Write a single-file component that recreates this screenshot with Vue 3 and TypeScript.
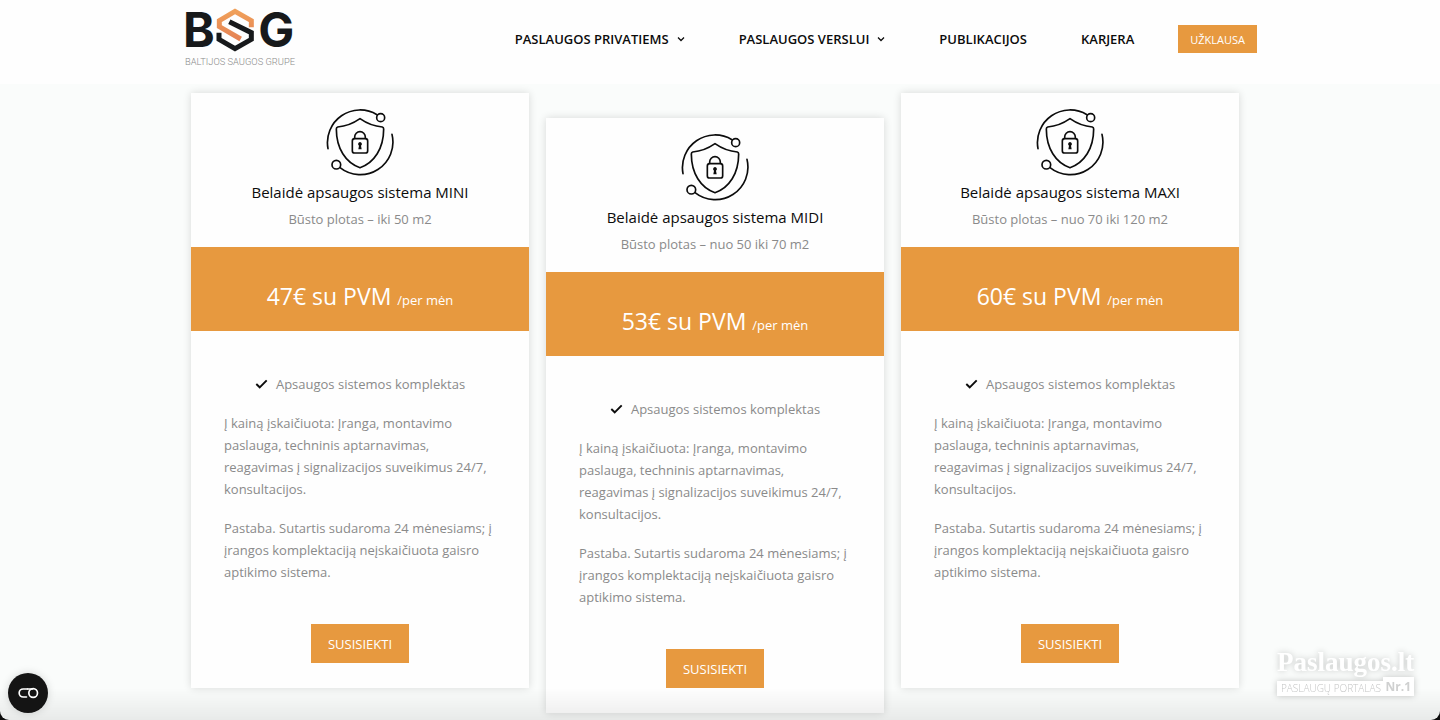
<script setup lang="ts">
interface NavItem {
  label: string
  hasMenu: boolean
}

interface Plan {
  id: string
  title: string
  area: string
  price: string
  lowered: boolean
}

const navItems: NavItem[] = [
  { label: 'PASLAUGOS PRIVATIEMS', hasMenu: true },
  { label: 'PASLAUGOS VERSLUI', hasMenu: true },
  { label: 'PUBLIKACIJOS', hasMenu: false },
  { label: 'KARJERA', hasMenu: false },
]

const plans: Plan[] = [
  { id: 'mini', title: 'Belaidė apsaugos sistema MINI', area: 'Būsto plotas – iki 50 m2', price: '47€ su PVM', lowered: false },
  { id: 'midi', title: 'Belaidė apsaugos sistema MIDI', area: 'Būsto plotas – nuo 50 iki 70 m2', price: '53€ su PVM', lowered: true },
  { id: 'maxi', title: 'Belaidė apsaugos sistema MAXI', area: 'Būsto plotas – nuo 70 iki 120 m2', price: '60€ su PVM', lowered: false },
]
</script>

<template>
  <div class="page">
    <header class="header">
      <div class="header-inner">
        <a class="logo" href="#" aria-label="Baltijos saugos grupe">
          <svg viewBox="39 0 342 201" width="114" height="67">
            <defs>
              <linearGradient id="logo-orange" x1="0" y1="0" x2="0" y2="1">
                <stop offset="0" stop-color="#f0a05a" />
                <stop offset="1" stop-color="#e58355" />
              </linearGradient>
            </defs>
            <text class="logo-letter" x="39" y="140">B</text>
            <text class="logo-letter" x="265" y="140">G</text>
            <g fill="none" stroke-width="15">
              <path stroke="url(#logo-orange)" d="M244 82V62L195 34L148 62V80L212 117" />
              <path stroke="#17191b" d="M147 98V118L195 146L244 118V98L178 65" />
            </g>
            <text class="logo-caption" x="45" y="195">BALTIJOS SAUGOS GRUPE</text>
          </svg>
        </a>
        <nav class="nav">
          <a v-for="item in navItems" :key="item.label" class="nav-link" href="#">
            {{ item.label }}
            <svg v-if="item.hasMenu" class="chevron" viewBox="0 0 8 8" width="8" height="8">
              <path d="M1 2.5L4 5.5L7 2.5" fill="none" stroke="currentColor" stroke-width="1.3" />
            </svg>
          </a>
          <button class="button button-small" type="button">UŽKLAUSA</button>
        </nav>
      </div>
    </header>

    <main class="plans">
      <article v-for="plan in plans" :key="plan.id" class="card" :class="{ lowered: plan.lowered }">
        <div class="card-head">
          <svg class="shield" viewBox="18 24 204 204" width="68" height="68" aria-hidden="true">
            <g fill="none" stroke="#0c0c0c" stroke-width="5" stroke-linecap="round" stroke-linejoin="round">
              <path d="M24 146A98 98 0 0 1 171 44" />
              <path d="M216 103A98 98 0 0 1 60 203" />
              <circle cx="182" cy="53" r="12" />
              <circle cx="49" cy="194" r="13" />
              <path d="M120 56C140 70 162 79 187 81Q191 82 191 87C191 145 163 188 120 203C77 188 49 145 49 87Q49 82 53 81C78 79 100 70 120 56Z" />
              <rect x="97" y="116" width="46" height="43" rx="7" />
              <path d="M104 115V111A16 16 0 0 1 136 111V115" />
            </g>
            <path d="M120 126a6 6 0 0 1 3 11l2 11h-10l2-11a6 6 0 0 1 3-11Z" fill="#0c0c0c" />
          </svg>
          <h2 class="title">{{ plan.title }}</h2>
          <p class="area">{{ plan.area }}</p>
        </div>
        <p class="price">{{ plan.price }} <span class="period">/per mėn</span></p>
        <div class="card-body">
          <p class="feature">
            <svg viewBox="0 0 13 10" width="13" height="10" aria-hidden="true">
              <path d="M1.3 5L4.7 8.3L11.7 1.3" fill="none" stroke="#0c0c0c" stroke-width="1.9" />
            </svg>
            Apsaugos sistemos komplektas
          </p>
          <p>Į kainą įskaičiuota: Įranga, montavimo paslauga, techninis aptarnavimas, reagavimas į signalizacijos suveikimus 24/7, konsultacijos.</p>
          <p>Pastaba. Sutartis sudaroma 24 mėnesiams; į įrangos komplektaciją neįskaičiuota gaisro aptikimo sistema.</p>
        </div>
        <button class="button button-large" type="button">SUSISIEKTI</button>
      </article>
    </main>

    <div class="bottom-shade"></div>
    <div class="corners"></div>

    <div class="watermark">
      <span class="watermark-name">Paslaugos.lt</span>
      <span class="watermark-bar">
        <span class="watermark-text">PASLAUGŲ PORTALAS</span>
        <strong class="watermark-rank">Nr.1</strong>
      </span>
    </div>

    <button class="consent" type="button" aria-label="Slapukų nustatymai">
      <svg viewBox="52 84 68 36" width="23" height="12">
        <g fill="none" stroke="#fff" stroke-width="5" stroke-linecap="round">
          <path d="M83 90H70A12 12 0 0 0 70 114H80" />
          <circle cx="100" cy="102" r="13" />
          <path d="M83 90H98" />
        </g>
      </svg>
    </button>
  </div>
</template>

<style>
html,
body {
  background: #fafcfb;
}

body {
  overflow: hidden;
}
</style>

<style scoped>
.page {
  min-height: 100vh;
  font-family: "Open Sans", "Noto Sans", sans-serif;
  font-size: 13px;
  line-height: 22px;
  color: #8a8a8a;
  background: #fafcfb;
}

.header {
  background: #fefefe;
}

.header-inner {
  display: flex;
  align-items: flex-start;
  justify-content: space-between;
  max-width: 1074px;
  min-height: 84px;
  margin: 0 auto;
}

.logo {
  display: flex;
  text-decoration: none;
}

.logo-letter {
  font-family: Inter, sans-serif;
  font-size: 144px;
  font-weight: 700;
  fill: #17191b;
}

.logo-caption {
  font-family: Roboto, sans-serif;
  font-size: 28px;
  font-weight: 300;
  fill: #8c8c8c;
}

.nav {
  display: flex;
  align-items: center;
  gap: 54px;
  padding-top: 25px;
}

.nav-link {
  display: flex;
  align-items: center;
  gap: 8px;
  color: #0c0c0c;
  font-size: 13px;
  font-weight: 600;
  text-decoration: none;
}

.button {
  border: 0;
  background: #e7993f;
  color: #fff;
  font-family: inherit;
  cursor: pointer;
}

.button-small {
  height: 28px;
  margin-left: -10px;
  padding: 0 12px;
  font-size: 11px;
}

.button-large {
  height: 39px;
  margin-top: 41px;
  padding: 0 17px;
  font-size: 13px;
}

.plans {
  display: grid;
  grid-template-columns: repeat(3, 1fr);
  align-items: start;
  gap: 17px;
  max-width: 1048px;
  margin: 0 auto;
  padding: 9px 10px 7px 0;
}

.card {
  display: flex;
  flex-direction: column;
  align-items: center;
  padding-bottom: 25px;
  background: #fefefe;
  box-shadow: 0 0 8px rgba(0, 0, 0, 0.14);
}

.lowered {
  margin-top: 25px;
}

.card-head {
  display: flex;
  flex-direction: column;
  align-items: center;
  padding: 15px 16px 17px;
}

.title,
.card p {
  margin: 0;
}

.title {
  margin-top: 4px;
  color: #0c0c0c;
  font-size: 15px;
  font-weight: 400;
  line-height: 24px;
}

.card .area {
  margin-top: 4px;
}

.card .price {
  align-self: stretch;
  padding: 33px 0 19px;
  background: #e7993f;
  color: #fff;
  font-size: 23px;
  line-height: 32px;
  text-align: center;
}

.period {
  font-size: 13px;
  line-height: 12px;
}

.card-body {
  display: flex;
  flex-direction: column;
  align-self: stretch;
  gap: 17px;
  padding: 42px 28px 0 33px;
}

.card .feature {
  display: flex;
  align-items: center;
  align-self: center;
  gap: 8px;
  margin-right: 5px;
}

.bottom-shade {
  position: fixed;
  inset: auto 0 0;
  height: 32px;
  background: linear-gradient(transparent, rgba(0, 0, 0, 0.07));
  pointer-events: none;
}

.corners {
  position: fixed;
  inset: 0;
  overflow: hidden;
  border-radius: 0 0 9px 9px;
  box-shadow: 0 0 0 12px #0c0c0c;
  pointer-events: none;
}

.watermark {
  position: fixed;
  right: 26px;
  bottom: 24px;
  display: flex;
  flex-direction: column;
  width: 137px;
  color: #fff;
  filter: drop-shadow(0 0 3px rgba(0, 0, 0, 0.22));
}

.watermark-name {
  font-family: "Liberation Serif", serif;
  font-size: 27px;
  font-weight: 700;
  line-height: 30px;
}

.watermark-bar {
  display: flex;
  align-items: flex-end;
}

.watermark-text {
  flex: 1;
  padding-left: 4px;
  background: #fff;
  color: #c4c5c5;
  font-size: 10px;
  font-weight: 300;
  line-height: 15px;
  white-space: nowrap;
}

.watermark-rank {
  padding: 0 3px;
  background: #fff;
  color: #cfd0d0;
  font-size: 12px;
  line-height: 19px;
}

.consent {
  position: fixed;
  bottom: 7px;
  left: 8px;
  display: flex;
  align-items: center;
  justify-content: center;
  width: 40px;
  height: 40px;
  padding: 0;
  border: 0;
  border-radius: 50%;
  background: #141414;
  box-shadow: 0 0 8px rgba(0, 0, 0, 0.15);
  cursor: pointer;
}
</style>
